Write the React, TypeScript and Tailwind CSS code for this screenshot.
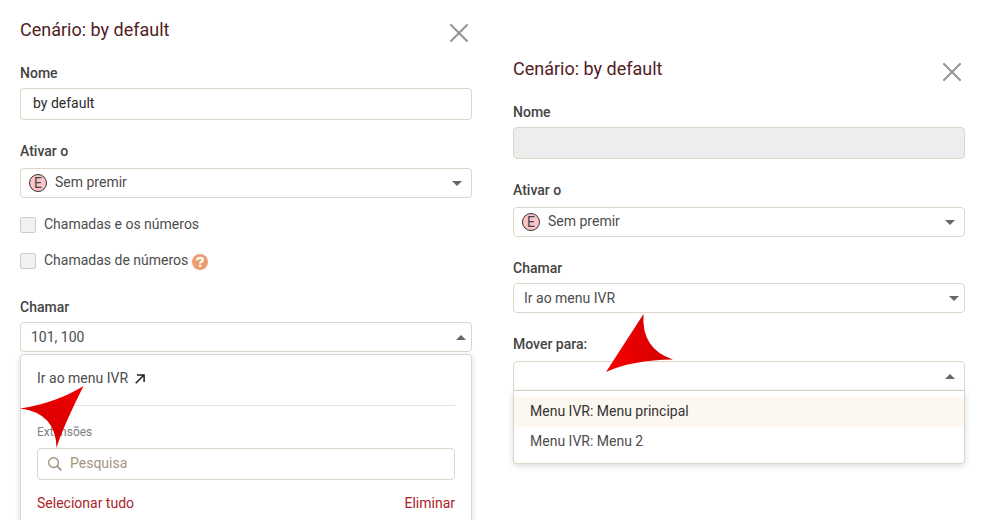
import { useState } from "react";
import type { ReactNode } from "react";

function Caret({ up = false }: { up?: boolean }) {
  return (
    <svg width="10" height="5" viewBox="0 0 10 5" fill="#666" aria-hidden="true">
      <path d={up ? "M0 5L5 0L10 5Z" : "M0 0H10L5 5Z"} />
    </svg>
  );
}

function SearchIcon() {
  return (
    <svg width="14" height="14" viewBox="0 0 14 14" fill="none" stroke="#a3947d" aria-hidden="true">
      <circle cx="5.6" cy="5.6" r="4.9" strokeWidth="1.4" />
      <path d="M9.2 9.2L13.3 13.3" strokeWidth="1.9" />
    </svg>
  );
}

function PanelHeader({ title }: { title: string }) {
  return (
    <header className="mb-[21px] flex h-6 items-end justify-between">
      <h2 className="text-lg leading-6 text-[#531c1f]">{title}</h2>
      <button type="button" aria-label="Fechar" className="mr-1">
        <svg width="18" height="18" viewBox="0 0 18 18" stroke="#939393" strokeWidth="2" strokeLinecap="round">
          <path d="M1 1L17 17M17 1L1 17" />
        </svg>
      </button>
    </header>
  );
}

function ActivateSelect({ id }: { id: string }) {
  return (
    <div>
      <label htmlFor={id} className="mb-[7px] block font-medium text-[#444]">
        Ativar o
      </label>
      <div className="relative">
        <select
          id={id}
          className="block h-[30px] w-full appearance-none rounded border border-[#ddd5c7] bg-white pr-8 pb-0.5 pl-[34px] leading-5"
        >
          <option>Sem premir</option>
        </select>
        <span className="pointer-events-none absolute inset-y-0 left-[9px] flex items-center">
          <span className="flex size-[18px] items-center justify-center rounded-full border border-[#333] bg-[#fcc4c6] pb-px text-sm leading-4 text-[#444]">
            E
          </span>
        </span>
        <span className="pointer-events-none absolute inset-y-0 right-[10px] flex items-center">
          <Caret />
        </span>
      </div>
    </div>
  );
}

function CheckRow({ label, children }: { label: string; children?: ReactNode }) {
  return (
    <div className="flex items-end">
      <label className="flex items-end gap-2">
        <input
          type="checkbox"
          className="mb-px size-4 appearance-none rounded-[2px] border border-[#ccc] bg-[#f1f1f1] checked:bg-[#a3947d]"
        />
        {label}
      </label>
      {children}
    </div>
  );
}

function CallScenario() {
  const [open, setOpen] = useState(true);

  return (
    <section>
      <PanelHeader title="Cenário: by default" />

      <label htmlFor="name" className="mb-[5px] block font-medium text-[#444]">
        Nome
      </label>
      <input
        id="name"
        defaultValue="by default"
        className="mb-[21px] block h-8 w-full rounded border border-[#ddd5c7] px-3 pb-0.5 text-[#2a2a2a]"
      />

      <ActivateSelect id="activate" />

      <div className="mt-4 mb-[27px] flex flex-col gap-4">
        <CheckRow label="Chamadas e os números" />
        <CheckRow label="Chamadas de números">
          <button type="button" aria-label="Ajuda" className="ml-1">
            <svg width="16" height="16" viewBox="0 0 16 16" fill="none">
              <circle cx="8" cy="8" r="8" fill="#eb9e70" />
              <path
                d="M5.2 6.2C5.3 4.6 6.4 3.8 8 3.8C9.7 3.8 10.8 4.7 10.8 6C10.8 7.8 8.1 7.7 8.1 9.6"
                stroke="#fff"
                strokeWidth="2.2"
              />
              <rect x="7" y="10.7" width="2.3" height="2.3" fill="#fff" />
            </svg>
          </button>
        </CheckRow>
      </div>

      <label htmlFor="call" className="mb-[5px] block font-medium text-[#444]">
        Chamar
      </label>
      <button
        id="call"
        type="button"
        role="combobox"
        aria-expanded={open}
        aria-controls="call-panel"
        onClick={() => setOpen(!open)}
        className="flex h-[30px] w-full items-center justify-between rounded border border-[#ddd5c7] pr-[5px] pl-[10px]"
      >
        101, 100
        <Caret up={open} />
      </button>

      {open && (
        <div
          id="call-panel"
          className="mt-0.5 rounded border border-[#ddd5c7] px-4 pt-[13px] pb-4 shadow-[0_2px_6px_rgba(0,0,0,0.15)]"
        >
          <div className="relative">
            <a href="#ivr" className="flex items-center gap-[7px]">
              Ir ao menu IVR
              <svg
                className="mt-0.5"
                width="10"
                height="10"
                viewBox="0 0 10 10"
                fill="none"
                stroke="#222"
                strokeWidth="1.5"
                aria-hidden="true"
              >
                <path d="M0.7 9.3L9 1M2 0.9H9.1V8" />
              </svg>
            </a>
            <svg
              className="pointer-events-none absolute top-[18px] -left-[17px]"
              width="64"
              height="62"
              viewBox="0 0 64 62"
              aria-hidden="true"
            >
              <defs>
                <linearGradient id="red-left" x1="0" y1="1" x2="1" y2="0">
                  <stop offset="0.2" stopColor="#d40000" />
                  <stop offset="1" stopColor="#f20000" />
                </linearGradient>
              </defs>
              <path d="M63.500 0Q36 17 0 22.500Q36 27 36.500 62Q42 43 63.500 0Z" fill="url(#red-left)" />
            </svg>
          </div>
          <hr className="mt-[17px] mb-[18px] border-[#e2e2e2]" />
          <label htmlFor="search" className="mb-2 block text-xs leading-4 text-[#808080]">
            Extensões
          </label>
          <div className="flex h-8 items-center gap-2 rounded border border-[#ddd5c7] px-[10px]">
            <SearchIcon />
            <input
              id="search"
              type="search"
              placeholder="Pesquisa"
              className="min-w-0 flex-1 pb-0.5 outline-none placeholder:text-[#a3947d]"
            />
          </div>
          <div className="mt-[13px] flex justify-between text-[#ab2328]">
            <button type="button">Selecionar tudo</button>
            <button type="button">Eliminar</button>
          </div>
        </div>
      )}
    </section>
  );
}

const menus = ["Menu IVR: Menu principal", "Menu IVR: Menu 2"];

function MenuScenario() {
  const [open, setOpen] = useState(true);
  const [active, setActive] = useState(0);

  return (
    <section className="pt-[39px]">
      <PanelHeader title="Cenário: by default" />

      <label htmlFor="menu-name" className="mb-[5px] block font-medium text-[#444]">
        Nome
      </label>
      <input
        id="menu-name"
        disabled
        className="mb-[21px] block h-8 w-full rounded border border-[#ddd5c7] bg-[#ededed] px-3"
      />

      <ActivateSelect id="menu-activate" />

      <label htmlFor="menu-call" className="mt-[21px] mb-[5px] block font-medium text-[#444]">
        Chamar
      </label>
      <div className="relative mb-[21px]">
        <select
          id="menu-call"
          className="block h-[30px] w-full appearance-none rounded border border-[#ddd5c7] bg-white pr-8 pl-[10px] leading-5"
        >
          <option>Ir ao menu IVR</option>
        </select>
        <span className="pointer-events-none absolute inset-y-0 right-1.5 flex items-center">
          <Caret />
        </span>
      </div>

      <div className="relative">
        <label htmlFor="move-to" className="mb-[7px] block font-medium text-[#444]">
          Mover para:
        </label>
        <button
          id="move-to"
          type="button"
          role="combobox"
          aria-expanded={open}
          aria-controls="move-list"
          onClick={() => setOpen(!open)}
          className="flex h-[30px] w-full items-center justify-end rounded-t border border-[#ddd5c7] pr-[9px]"
        >
          <Caret up={open} />
        </button>
        {open && (
          <ul
            id="move-list"
            role="listbox"
            className="rounded-b border border-t-0 border-[#ddd5c7] py-1.5 shadow-[0_2px_6px_rgba(0,0,0,0.15)]"
          >
            {menus.map((menu, i) => (
              <li
                key={menu}
                role="option"
                aria-selected={i === active}
                onMouseEnter={() => setActive(i)}
                className={`px-4 pt-1 pb-1.5 ${i === active ? "bg-[#fcf7f0] text-[#333]" : ""}`}
              >
                {menu}
              </li>
            ))}
          </ul>
        )}
        <svg
          className="pointer-events-none absolute -top-5 left-[93px]"
          width="67"
          height="58"
          viewBox="0 0 67 58"
          aria-hidden="true"
        >
          <defs>
            <linearGradient id="red-right" x1="0" y1="0.6" x2="1" y2="0.4">
              <stop offset="0.2" stopColor="#f00000" />
              <stop offset="1" stopColor="#cc0000" />
            </linearGradient>
          </defs>
          <path d="M0 58L37.500 0Q35 35 67 45.500Q26 46 0 58Z" fill="url(#red-right)" />
        </svg>
      </div>
    </section>
  );
}

export default function App() {
  return (
    <main className="grid h-screen grid-cols-2 items-start gap-x-[41px] overflow-hidden bg-white px-5 pt-[18px] font-['Roboto',sans-serif] text-sm leading-5 text-[#4d4d4d]">
      <CallScenario />
      <MenuScenario />
    </main>
  );
}
